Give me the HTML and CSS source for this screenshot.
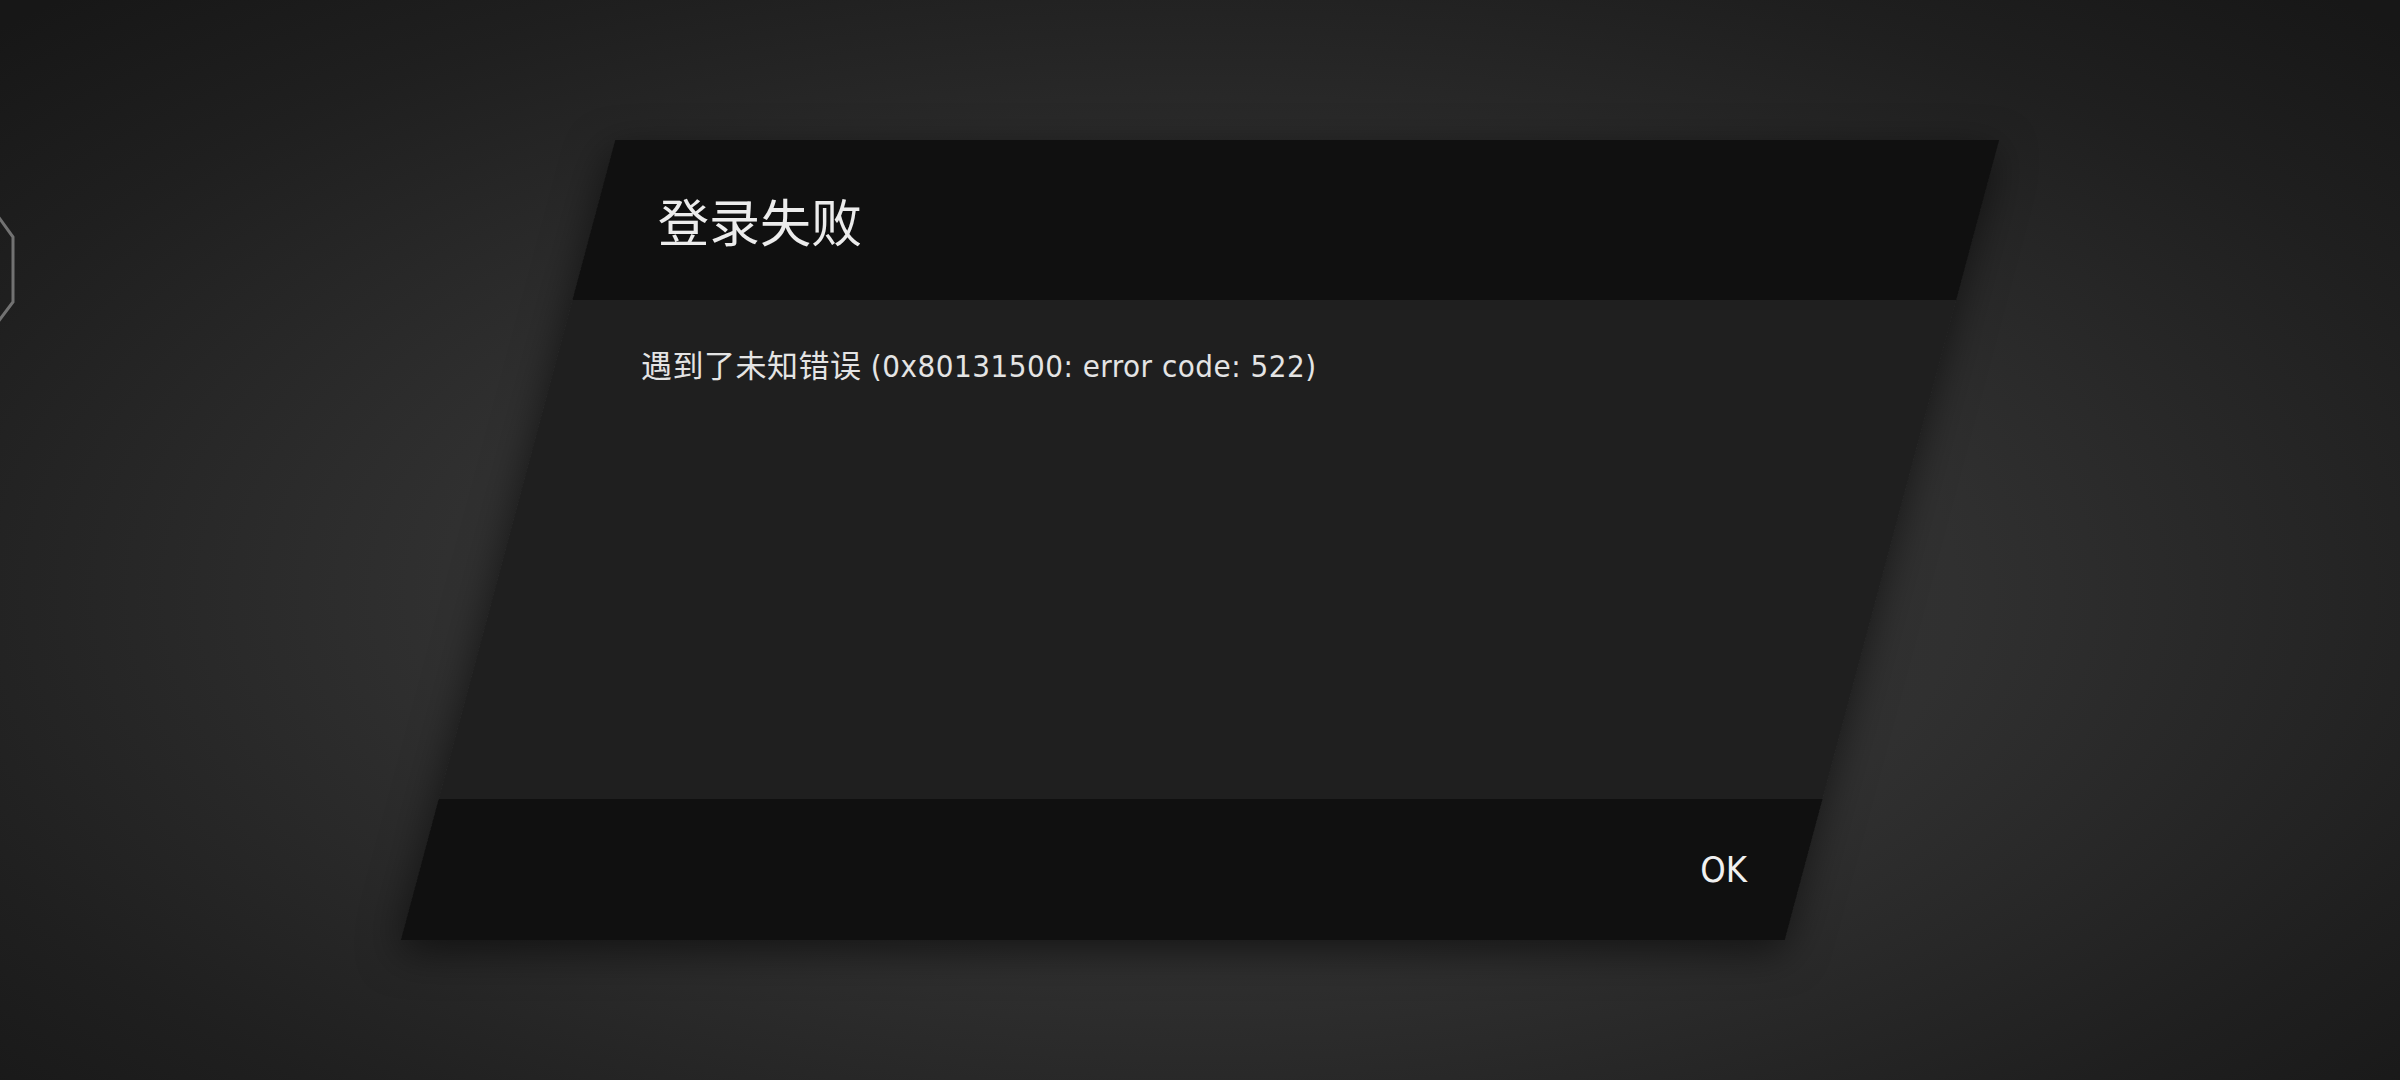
FILE: index.html
```html
<!DOCTYPE html>
<html lang="zh-CN">
<head>
  <meta charset="UTF-8">
  <meta name="viewport" content="width=device-width, initial-scale=1.0">
  <title>登录失败</title>
  <link rel="stylesheet" href="styles.css">
</head>
<body>
  <!-- edge of the menu button behind the overlay -->
  <svg class="side-hex" width="30" height="110" viewBox="0 0 30 110">
    <polyline points="-8,-8 13,21 13,86 -8,114" fill="none" stroke="#727272" stroke-width="3"/>
  </svg>

  <div class="dialog">
    <div class="dialog-header">
      <h1 class="dialog-title">登录失败</h1>
    </div>
    <div class="dialog-body">
      <p class="dialog-message">遇到了未知错误 (0x80131500: error code: 522)</p>
    </div>
    <div class="dialog-footer">
      <button class="btn-ok">OK</button>
    </div>
  </div>
</body>
</html>
```

FILE: styles.css
```css
html, body {
  height: 100%;
}
body {
  margin: 0;
  padding: 0;
  overflow: hidden;
  font-family: "Liberation Sans Narrow", "DejaVu Sans Condensed", "Noto Sans CJK SC", sans-serif;
  color: #e9e9e9;
  background: radial-gradient(ellipse 70% 75% at 50% 55%, #383838 0%, #303030 45%, #1f1f1f 80%, #171717 100%);
  display: flex;
  align-items: center;
  justify-content: center;
}
.side-hex {
  position: absolute;
  left: 0;
  top: 216px;
}
.dialog {
  position: relative;
  z-index: 0;
  width: 1384px;
  height: 800px;
  display: flex;
  flex-direction: column;
}
.dialog::before {
  content: "";
  position: absolute;
  top: 0;
  left: 0;
  right: 0;
  bottom: 0;
  z-index: -1;
  transform: skewX(-15deg);
  background: linear-gradient(#101010 0, #101010 160px, #1f1f1f 160px, #1f1f1f 659px, #101010 659px);
  box-shadow: 0 12px 40px rgba(0, 0, 0, 0.55);
}
.dialog-header {
  height: 160px;
  display: flex;
  align-items: center;
  padding-left: 150px;
}
.dialog-title {
  margin: 0;
  font-family: "Noto Sans CJK SC", sans-serif;
  font-size: 51px;
  font-weight: 400;
  line-height: 1;
  color: #ececec;
}
.dialog-body {
  flex: 1;
  padding: 46px 0 0 133px;
}
.dialog-message {
  margin: 0;
  font-size: 31px;
  line-height: 40px;
  letter-spacing: 0.5px;
  color: #e4e4e4;
}
.dialog-footer {
  height: 141px;
  display: flex;
  align-items: center;
  justify-content: flex-end;
  padding-right: 145px;
}
.btn-ok {
  background: none;
  border: none;
  padding: 0;
  font-family: "Liberation Sans Narrow", "DejaVu Sans Condensed", sans-serif;
  font-size: 36px;
  line-height: 1;
  color: #f0f0f0;
  cursor: pointer;
}
```
